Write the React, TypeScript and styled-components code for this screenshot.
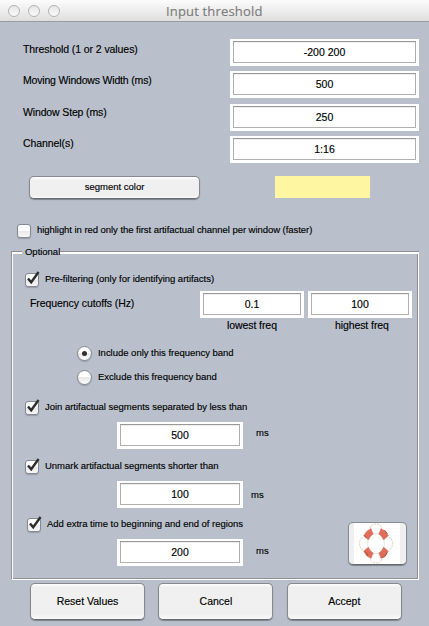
import React from "react";
import styled, { createGlobalStyle } from "styled-components";

const GlobalStyle = createGlobalStyle`
  html, body { margin: 0; padding: 0; background: #b9c0cc; }
  *, *::before, *::after { box-sizing: border-box; }
`;

const Window = styled.main`
  width: 429px;
  height: 626px;
  overflow: hidden;
  background: #b9c0cc;
  color: #000;
  font-family: "Liberation Sans", Arial, sans-serif;
  font-size: 11px;
  -webkit-text-stroke: 0.15px;
`;

const TitleBar = styled.header`
  display: flex;
  align-items: center;
  height: 22px;
  padding-left: 8px;
  background: linear-gradient(#fcfcfc, #dedede);
  border-bottom: 1px solid #9b9c9e;
`;

const Lights = styled.div`
  display: flex;
  gap: 8px;
`;

const Light = styled.span`
  width: 12px;
  height: 12px;
  border: 1.5px solid #b4b4b4;
  border-radius: 50%;
  background: linear-gradient(#e6e6e6, #fafafa);
`;

const Title = styled.h1`
  margin: 0 0 0 106px;
  font: 13px/20px "Open Sans", "Noto Sans", sans-serif;
  letter-spacing: 0.17px;
  color: #7c7c7c;
  white-space: nowrap;
`;

const Text = styled.span<{ $spacing?: number }>`
  display: block;
  flex: none;
  height: 14px;
  line-height: 14px;
  font-size: 10.5px;
  letter-spacing: ${(p) => p.$spacing ?? -0.08}px;
  white-space: nowrap;
`;

const SmallText = styled(Text)`
  font-size: 9.5px;
  letter-spacing: ${(p) => p.$spacing ?? -0.02}px;
`;

const Form = styled.section`
  display: grid;
  grid-template-columns: 207px 189px;
  padding: 17px 0 0 23px;
  height: 154px;
`;

const Labels = styled.div`
  display: flex;
  flex-direction: column;
  gap: 17.3px;
  padding-top: 3px;
`;

const Fields = styled.div`
  display: flex;
  flex-direction: column;
  gap: 5.3px;
`;

const Field = styled.input<{ $width?: number }>`
  display: block;
  flex: none;
  width: ${(p) => p.$width ?? 189}px;
  height: 27px;
  padding: 0;
  border: solid #fff;
  border-width: 2px 3px 3px;
  border-radius: 0;
  outline: 0;
  background: #fff;
  box-shadow: inset 0 1px 0 #999, inset 0 0 0 1px #b0b0b0, inset 0 2px 0 #eee;
  color: #000;
  font: 10.5px "Liberation Sans", Arial, sans-serif;
  text-align: center;
`;

const ColorRow = styled.div`
  display: flex;
  height: 47px;
  padding-left: 29px;
  gap: 75px;
`;

const Button = styled.button<{ $width: number; $height: number; $size?: number }>`
  flex: none;
  width: ${(p) => p.$width}px;
  height: ${(p) => p.$height}px;
  padding: 0 0 2px;
  border: 1px solid #85888e;
  border-bottom-color: #666a70;
  border-radius: 5px;
  background: linear-gradient(#fff 0, #f0f0f0 3px, #efefef 85%, #fafafa);
  box-shadow: 0 1px 1px #7d838d;
  color: #000;
  font: ${(p) => p.$size ?? 10.5}px "Liberation Sans", Arial, sans-serif;
`;

const Swatch = styled.div`
  width: 95px;
  height: 22px;
  background: #fef6a0;
`;

const ChoiceRow = styled.label<{ $left: number }>`
  display: flex;
  height: 14px;
  padding-left: ${(p) => p.$left}px;
  gap: 6px;
`;

const Box = styled.span`
  display: block;
  flex: none;
  width: 14px;
  height: 14px;
  margin-top: 1px;
  border: 1px solid #858993;
  border-radius: 3px;
  background: linear-gradient(#fff 45%, #e9e9e9 50%, #f7f7f7);
  box-shadow: 0 1px 1px #969da8;
  svg { display: block; margin: -3px 0 0 -1px; overflow: visible; }
`;

const Radio = styled.span`
  display: grid;
  place-items: center;
  flex: none;
  width: 15px;
  height: 15px;
  border: 1px solid #858993;
  border-radius: 50%;
  background: linear-gradient(#fff 45%, #e9e9e9 50%, #fcfcfc);
  box-shadow: 0 1px 1px #969da8;
`;

const Dot = styled.span`
  width: 5px;
  height: 5px;
  border-radius: 50%;
  background: #303030;
`;

const Panel = styled.section`
  display: flex;
  flex-direction: column;
  width: 408px;
  height: 329px;
  margin: 14px 0 0 11px;
  border: 1px solid #8f9196;
  border-top: 0;
  border-right-color: #fff;
  border-bottom-color: #fff;
  box-shadow: inset 1px 0 #fff, inset -1px -1px #8f9196;
`;

const PanelHead = styled.div`
  display: flex;
  align-items: flex-start;
  flex: none;
  height: 21px;
  margin-right: -1px;
`;

const Legend = styled.div`
  height: 14px;
  width: 38px;
  margin-top: -6px;
  padding-left: 3px;
`;

const TopEdge = styled.span<{ $width?: number }>`
  flex: ${(p) => (p.$width ? "none" : 1)};
  width: ${(p) => p.$width ?? 0}px;
  height: 3px;
  border-top: 1px solid #8f9196;
  border-bottom: 2px solid #fff;
`;

const CutoffRow = styled.div`
  display: flex;
  height: 27px;
  margin-top: 5px;
  padding-left: 18px;
  gap: 4px;
`;

const CutoffLabel = styled.div`
  width: 166px;
  padding-top: 5px;
`;

const Captions = styled.div`
  display: flex;
  height: 14px;
  padding-left: 215px;
  gap: 58px;
`;

const TimeRow = styled.div<{ $gap: number }>`
  display: flex;
  height: 27px;
  margin-top: 8px;
  padding-left: 105px;
  gap: ${(p) => p.$gap}px;
`;

const Unit = styled.div<{ $top?: number }>`
  padding-top: ${(p) => p.$top ?? 4}px;
`;

const Help = styled.div`
  margin: -17px 0 0 66px;
`;

const HelpButton = styled.button`
  display: grid;
  place-items: center;
  width: 59px;
  height: 43px;
  padding: 0;
  border: 1px solid #888c93;
  border-bottom-color: #666a70;
  border-radius: 5px;
  background: linear-gradient(90deg, #efefef 5px, #fff 5px 51px, #efefef 51px);
  box-shadow: 0 1px 1px #7d838d;
  svg { display: block; margin-left: -2px; }
`;

const Footer = styled.footer`
  display: flex;
  padding: 3px 0 0 30px;
  gap: 13.4px;
`;

const Space = styled.div<{ $height: number }>`
  flex: none;
  height: ${(p) => p.$height}px;
`;

function Check() {
  return (
    <svg width="15" height="15" viewBox="0 0 15 15" fill="none">
      <path d="M3 7.4 6.2 11.2 13.6 1" stroke="#2d2d2d" strokeWidth="2.4" />
    </svg>
  );
}

function LifeRing() {
  return (
    <svg width="36" height="41" viewBox="0 0 36 41" fill="none">
      <path d="M12 5C13 1.5 16 1 18 1s5 .5 6 4M31 14c2.5 1 3.5 4 3.5 6.5S33.5 26 31 27M24 36c-1 3.5-4 4-6 4s-5-.5-6-4M5 27c-2.5-1-3.5-4-3.5-6.5S2.5 15 5 14" stroke="#e3ccb7" strokeWidth="1" strokeDasharray="2 1" />
      <ellipse cx="18" cy="20.5" rx="8.5" ry="10" stroke="#e9e9ee" strokeWidth="1" />
      <g fill="#e06c5a" stroke="#d28472" strokeWidth=".5">
        <path d="M5.6 12.8Q8 7.6 13 5.4l2.3 5.6q-3.4 1.8-4.9 6Z" />
        <path d="M23 5.4Q28 7.6 30.4 12.8l-4.8 4.2q-1.5-4.2-4.9-6Z" />
        <path d="M30.4 28.2Q28 33.4 23 35.6L20.7 30q3.4-1.8 4.9-6Z" />
        <path d="M13 35.6Q8 33.4 5.6 28.2l4.8-4.2q1.5 4.2 4.9 6Z" />
      </g>
      <path d="m6.5 13 2 1.5m18-7.5 3 4M6.5 28l3 3-.5 2m15 1.5 3-1 2-4" stroke="#a94b3e" strokeWidth=".9" />
    </svg>
  );
}

export default function App() {
  return (
    <>
      <GlobalStyle />
      <Window>
        <TitleBar>
          <Lights><Light /><Light /><Light /></Lights>
          <Title>Input threshold</Title>
        </TitleBar>
        <Form>
          <Labels>
            <Text>Threshold (1 or 2 values)</Text>
            <Text $spacing={-0.18}>Moving Windows Width (ms)</Text>
            <Text $spacing={-0.14}>Window Step (ms)</Text>
            <Text>Channel(s)</Text>
          </Labels>
          <Fields>
            <Field defaultValue="-200 200" />
            <Field defaultValue="500" />
            <Field defaultValue="250" />
            <Field defaultValue="1:16" />
          </Fields>
        </Form>
        <ColorRow>
          <Button $width={171} $height={23} $size={9.5}>segment color</Button>
          <Swatch />
        </ColorRow>
        <ChoiceRow $left={17}>
          <Box />
          <SmallText $spacing={-0.05}>highlight in red only the first artifactual channel per window (faster)</SmallText>
        </ChoiceRow>
        <Panel>
          <PanelHead>
            <TopEdge $width={10} />
            <Legend><SmallText>Optional</SmallText></Legend>
            <TopEdge />
          </PanelHead>
          <ChoiceRow $left={13}>
            <Box><Check /></Box>
            <SmallText>Pre-filtering (only for identifying artifacts)</SmallText>
          </ChoiceRow>
          <CutoffRow>
            <CutoffLabel><Text>Frequency cutoffs (Hz)</Text></CutoffLabel>
            <Field $width={104} defaultValue="0.1" />
            <Field $width={104} defaultValue="100" />
          </CutoffRow>
          <Captions>
            <Text>lowest freq</Text>
            <Text>highest freq</Text>
          </Captions>
          <Space $height={14} />
          <ChoiceRow $left={65}>
            <Radio><Dot /></Radio>
            <SmallText>Include only this frequency band</SmallText>
          </ChoiceRow>
          <Space $height={10} />
          <ChoiceRow $left={65}>
            <Radio />
            <SmallText>Exclude this frequency band</SmallText>
          </ChoiceRow>
          <Space $height={16} />
          <ChoiceRow $left={13}>
            <Box><Check /></Box>
            <SmallText>Join artifactual segments separated by less than</SmallText>
          </ChoiceRow>
          <TimeRow $gap={13}>
            <Field $width={126} defaultValue="500" />
            <Unit><SmallText>ms</SmallText></Unit>
          </TimeRow>
          <Space $height={10} />
          <ChoiceRow $left={13}>
            <Box><Check /></Box>
            <SmallText>Unmark artifactual segments shorter than</SmallText>
          </ChoiceRow>
          <TimeRow $gap={8}>
            <Field $width={126} defaultValue="100" />
            <Unit $top={7}><SmallText>ms</SmallText></Unit>
          </TimeRow>
          <Space $height={9} />
          <ChoiceRow $left={15}>
            <Box><Check /></Box>
            <SmallText>Add extra time to beginning and end of regions</SmallText>
          </ChoiceRow>
          <TimeRow $gap={13}>
            <Field $width={126} defaultValue="200" />
            <Unit $top={5}><SmallText>ms</SmallText></Unit>
            <Help><HelpButton aria-label="Help"><LifeRing /></HelpButton></Help>
          </TimeRow>
        </Panel>
        <Footer>
          <Button $width={115} $height={37}>Reset Values</Button>
          <Button $width={115} $height={37}>Cancel</Button>
          <Button $width={115} $height={37}>Accept</Button>
        </Footer>
      </Window>
    </>
  );
}
